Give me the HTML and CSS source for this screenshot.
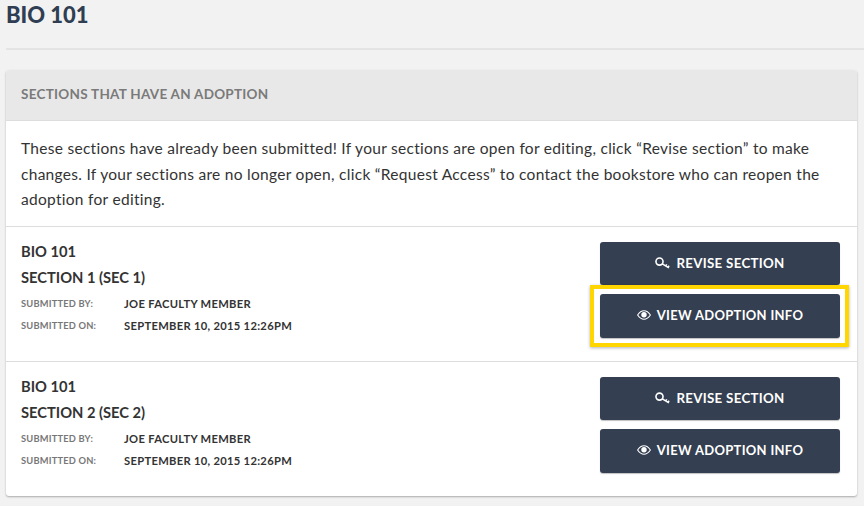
FILE: index.html
```html
<!DOCTYPE html>
<html lang="en">
<head>
<meta charset="utf-8">
<title>BIO 101</title>
<link rel="stylesheet" href="styles.css">
</head>
<body>
<svg class="defs" width="0" height="0" aria-hidden="true">
  <symbol id="key" viewBox="0 0 14 11"><circle cx="4.2" cy="4.2" r="3.3" fill="none" stroke="currentColor" stroke-width="1.5"/><path d="M6.8 6.3 L13 10 M10 8.2 L11 6.8 M12 9.4 L13.2 8" fill="none" stroke="currentColor" stroke-width="1.5"/></symbol>
  <symbol id="eye" viewBox="0 0 14 10"><path d="M0.6 5 C3 1.4 5 .8 7 .8 C9 .8 11 1.4 13.4 5 C11 8.6 9 9.2 7 9.2 C5 9.2 3 8.6 .6 5 Z" fill="none" stroke="currentColor" stroke-width="1.1"/><circle cx="7" cy="4.8" r="2.7" fill="currentColor"/></symbol>
</svg>
<header class="page-head"><h1>BIO 101</h1></header>
<main class="card">
  <h2 class="card-head">SECTIONS THAT HAVE AN ADOPTION</h2>
  <p class="intro">These sections have already been submitted! If your sections are open for editing, click “Revise section” to make changes. If your sections are no longer open, click “Request Access” to contact the bookstore who can reopen the adoption for editing.</p>
  <section class="row">
    <div class="info">
      <h3>BIO 101</h3>
      <h3>SECTION 1 (SEC 1)</h3>
      <dl class="meta">
        <dt>SUBMITTED BY:</dt><dd>JOE FACULTY MEMBER</dd>
        <dt>SUBMITTED ON:</dt><dd>SEPTEMBER 10, 2015 12:26PM</dd>
      </dl>
    </div>
    <div class="actions">
      <a class="btn"><svg class="ico-key"><use href="#key"/></svg>REVISE SECTION</a>
      <a class="btn highlighted"><svg class="ico-eye"><use href="#eye"/></svg>VIEW ADOPTION INFO</a>
    </div>
  </section>
  <section class="row">
    <div class="info">
      <h3>BIO 101</h3>
      <h3>SECTION 2 (SEC 2)</h3>
      <dl class="meta">
        <dt>SUBMITTED BY:</dt><dd>JOE FACULTY MEMBER</dd>
        <dt>SUBMITTED ON:</dt><dd>SEPTEMBER 10, 2015 12:26PM</dd>
      </dl>
    </div>
    <div class="actions">
      <a class="btn"><svg class="ico-key"><use href="#key"/></svg>REVISE SECTION</a>
      <a class="btn"><svg class="ico-eye"><use href="#eye"/></svg>VIEW ADOPTION INFO</a>
    </div>
  </section>
</main>
</body>
</html>
```
FILE: styles.css
```css
* { box-sizing: border-box; }
html, body { margin: 0; height: 506px; overflow: hidden; }
body { background: #f2f2f2; font-family: "Lato", "Liberation Sans", sans-serif; color: #333; }
.defs { position: absolute; }
.page-head { margin: 0 0 0 6px; height: 50px; border-bottom: 2px solid #e4e4e4; }
h1 { margin: 0; padding-top: 1px; font-size: 22px; line-height: 28px; font-weight: 900; color: #2f3e52; }
.card { margin: 20px 7px 0 6px; height: 426px; background: #fff; border-radius: 3px; box-shadow: 0 1px 2px rgba(0,0,0,.3); }
.card-head { margin: 0; height: 51px; padding: 0 15px; background: #e8e8e8; border-bottom: 1px solid #ddd; border-radius: 3px 3px 0 0; font-size: 13.5px; line-height: 49px; font-weight: 700; color: #7a7a7a; letter-spacing: .27px; }
.intro { margin: 0; padding: 15px; height: 105px; font-size: 15.5px; line-height: 25.5px; color: #333; letter-spacing: .29px; }
.row { display: flex; justify-content: space-between; height: 135px; padding: 15px 17px 0 15px; border-top: 1px solid #ddd; }
.info { margin-top: -3px; }
h3 { margin: 0; font-size: 14.7px; line-height: 25.5px; font-weight: 700; color: #333; }
.meta { display: grid; grid-template-columns: 103px auto; margin: 3px 0 0; align-items: center; }
dt { font-size: 9.3px; line-height: 22px; font-weight: 700; color: #777; letter-spacing: .2px; }
dd { margin: 0; font-size: 11.2px; line-height: 22px; font-weight: 700; color: #333; letter-spacing: .3px; }
.actions { display: flex; flex-direction: column; gap: 9px; width: 240px; }
.btn { position: relative; display: flex; align-items: center; justify-content: center; gap: 6px; height: 44px; padding-bottom: 2px; background: #343f51; border-radius: 3px; color: #fff; font-size: 13px; font-weight: 700; letter-spacing: .3px; box-shadow: 0 1px 1px rgba(0,0,0,.25); }
.btn:first-child { height: 43px; font-size: 13.3px; }
.ico-key { width: 15px; height: 12px; }
.ico-eye { width: 14px; height: 10px; }
.highlighted::after { content: ""; position: absolute; inset: -9px -9px -9px -10px; border: 4px solid #ffd600; box-shadow: 0 1px 3px rgba(0,0,0,.3); pointer-events: none; }
```
